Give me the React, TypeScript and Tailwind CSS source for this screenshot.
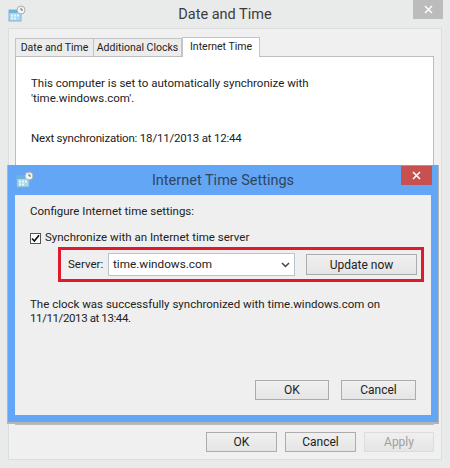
const Icon = () => (
  <svg width="18" height="18" viewBox="0 0 18 18">
    <rect x="1" y="5" width="12" height="11" fill="#a9d8f0" stroke="#7fb4d4" />
    <rect x="1" y="5" width="12" height="3" fill="#6fb3dc" />
    <path d="M3 9.5h2v2H3zM6 9.5h2v2H6zM9 9.5h2v2H9zM3 12.5h2v2H3zM6 12.5h2v2H6z" fill="#e8f6fc" />
    <circle cx="13" cy="5" r="4" fill="#f4f4f2" stroke="#a8b0b4" />
    <path d="M13 2.8V5h2" fill="none" stroke="#6b7378" />
  </svg>
);

const Btn = ({ label, className = '' }: { label: string; className?: string }) => (
  <button className={`flex items-center justify-center border border-[#acacac] bg-gradient-to-b from-[#f0f0f0] to-[#e5e5e5] text-[12px] text-[#222] ${className}`}>
    {label}
  </button>
);

export default function App() {
  return (
    <div
      className="relative flex h-[468px] w-[450px] flex-col overflow-hidden bg-[#e9ebea] text-[11.5px] text-[#222]"
      style={{ fontFamily: 'Roboto, sans-serif' }}
    >
      {/* main window */}
      <div className="relative flex h-[28px] shrink-0 items-center justify-center pt-[1px]">
        <div className="absolute left-[8px] top-[5px]"><Icon /></div>
        <span className="text-[14.5px] text-[#3c3c3c]">Date and Time</span>
        <div className="absolute right-[7px] top-0 flex h-[19px] w-[30px] items-center justify-center bg-[#bcbcbc] text-white">
          <svg width="9" height="9" viewBox="0 0 9 9"><path d="M1 1l7 7M8 1l-7 7" stroke="#fff" strokeWidth="1.5" /></svg>
        </div>
      </div>
      <div className="mx-[8px] flex h-[432px] w-[434px] flex-col border border-[#dcdddc] bg-[#f0f0f0] pl-[6px] pr-[7px] pt-[7px]">
        <div className="flex h-[20px] items-end whitespace-nowrap text-[10.5px]">
          <div className="flex h-[18px] w-[79px] items-center justify-center border border-b-0 border-[#c4c4c4] bg-[#ececec]">Date and Time</div>
          <div className="flex h-[18px] w-[88px] items-center justify-center border border-b-0 border-l-0 border-[#c4c4c4] bg-[#ececec]">Additional Clocks</div>
          <div className="relative z-10 -mb-px flex h-[20px] w-[78px] items-center justify-center border border-b-0 border-[#c4c4c4] bg-white pb-[2px]">Internet Time</div>
        </div>
        <div className="h-[369px] border border-[#bdbdbd] bg-white pl-[15px] pt-[19px]">
          <p className="leading-[15px]">This computer is set to automatically synchronize with<br />'time.windows.com'.</p>
          <p className="mt-[25px] leading-[15px] tracking-[-0.2px]">Next synchronization: 18/11/2013 at 12:44</p>
        </div>
        <div className="flex justify-end gap-[8px] pt-[7px]">
          <Btn label="OK" className="h-[20px] w-[71px]" />
          <Btn label="Cancel" className="h-[20px] w-[71px]" />
          <Btn label="Apply" className="h-[20px] w-[70px] border-[#dcdcdc] text-[#a0a0a0]" />
        </div>
      </div>

      {/* settings dialog on top */}
      <div className="absolute left-[8px] top-[165px] flex h-[257px] w-[430px] flex-col bg-[#63a6f5] px-[7px] pb-[7px] shadow-[0_1px_0_1px_#b5b5b5]">
        <div className="relative flex h-[30px] shrink-0 items-center justify-center pt-[2px]">
          <div className="absolute left-[1px] top-[6px]"><Icon /></div>
          <span className="text-[14.5px] text-[#2f4560]">Internet Time Settings</span>
          <div className="absolute right-[-1px] top-[1px] flex h-[19px] w-[31px] items-center justify-center bg-[#c75050]">
            <svg width="9" height="9" viewBox="0 0 9 9"><path d="M1 1l7 7M8 1l-7 7" stroke="#fff" strokeWidth="1.5" /></svg>
          </div>
        </div>
        <div className="flex flex-1 flex-col bg-[#eeefee] pl-[15px] pr-[7px] pt-[8px]">
          <div className="leading-[16px]">Configure Internet time settings:</div>
          <div className="mt-[11px] flex h-[16px] items-center gap-[4px]">
            <div className="flex h-[11px] w-[11px] items-center justify-center border border-[#555] bg-white">
              <svg width="9" height="9" viewBox="0 0 9 9"><path d="M1 4.5l2.4 2.6L8 1.2" fill="none" stroke="#111" strokeWidth="1.6" /></svg>
            </div>
            <span>Synchronize with an Internet time server</span>
          </div>
          <div className="ml-[28px] mt-[1px] flex h-[35px] w-[366px] items-center border-[3px] border-[#e0192e] pl-[7px] pr-[4px]">
            <span className="w-[40px]">Server:</span>
            <div className="flex h-[23px] w-[187px] items-center justify-between border border-[#b9c4cc] bg-white pl-[4px] pr-[4px]">
              <span className="text-[11.75px]">time.windows.com</span>
              <svg width="9" height="6" viewBox="0 0 9 6"><path d="M1 1l3.5 3.5L8 1" fill="none" stroke="#444" strokeWidth="1.5" /></svg>
            </div>
            <Btn label="Update now" className="ml-[11px] h-[21px] w-[111px]" />
          </div>
          <p className="mt-[15px] leading-[14px]">The clock was successfully synchronized with time.windows.com on<br /><span className="tracking-[-0.4px]">11/11/2013 at 13:44.</span></p>
          <div className="mt-auto flex justify-end gap-[12px] pb-[15px] pr-[8px]">
            <Btn label="OK" className="h-[20px] w-[74px] border-[#63a6f5]" />
            <Btn label="Cancel" className="h-[20px] w-[75px]" />
          </div>
        </div>
      </div>
    </div>
  );
}
